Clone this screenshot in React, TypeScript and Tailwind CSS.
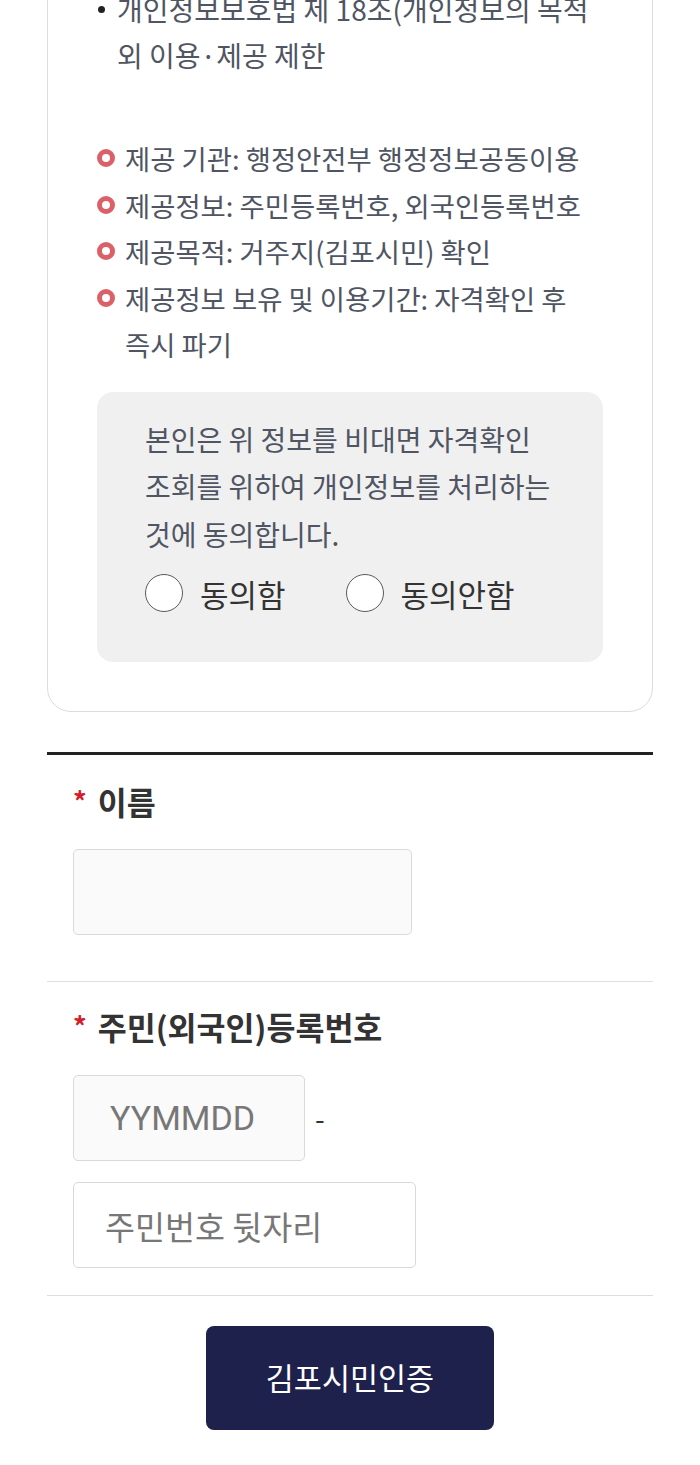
import { ReactNode } from "react"

const font = {
  fontFamily: '"Noto Sans CJK KR", "Noto Sans", sans-serif',
}

const RedBullet = ({ children }: { children: ReactNode }) => (
  <li className="flex items-start">
    <span className="mt-[14px] mr-[10px] h-[18px] w-[18px] shrink-0 rounded-full border-[5px] border-[#da6168] bg-white" />
    <span>{children}</span>
  </li>
)

const Radio = ({ label }: { label: string }) => (
  <label className="flex items-center gap-[17px]">
    <span className="h-[38px] w-[38px] rounded-full border-[1.5px] border-[#5a5a5a] bg-white" />
    <span className="text-[31px] leading-none text-[#333]">{label}</span>
  </label>
)

const FieldLabel = ({ children }: { children: ReactNode }) => (
  <div className="flex items-center pl-[26px] text-[31.5px] font-bold leading-[40px] text-[#333]">
    <span className="mr-[11px] text-[27px] text-[#d21f2d]">*</span>
    <span>{children}</span>
  </div>
)

export default function App() {
  return (
    <div className="min-h-[1465px] bg-white px-[47px]" style={font}>
      <div className="-mt-[60px] rounded-[24px] border border-[#dcdcdc] px-[49px] pt-[45px] pb-[49px]">
        <ul className="text-[28px] leading-[46px] text-[#4f5563]">
          <li className="flex items-start">
            <span className="mt-[20px] mr-[12px] ml-[1px] h-[7px] w-[7px] shrink-0 rounded-full bg-[#222]" />
            <span className="whitespace-nowrap">
              개인정보보호법 제 18조(개인정보의 목적
              <br />외 이용·제공 제한
            </span>
          </li>
        </ul>

        <ul className="mt-[57px] text-[27.4px] leading-[46.5px] text-[#4f5563]">
          <RedBullet>제공 기관: 행정안전부 행정정보공동이용</RedBullet>
          <RedBullet>제공정보: 주민등록번호, 외국인등록번호</RedBullet>
          <RedBullet>제공목적: 거주지(김포시민) 확인</RedBullet>
          <RedBullet>
            제공정보 보유 및 이용기간: 자격확인 후
            <br />
            즉시 파기
          </RedBullet>
        </ul>

        <div className="mt-[24px] rounded-[16px] bg-[#f0f0f0] px-[48px] pt-[24px] pb-[50px]">
          <p className="whitespace-nowrap text-[28px] leading-[47.5px] text-[#4f5563]">
            본인은 위 정보를 비대면 자격확인
            <br />
            조회를 위하여 개인정보를 처리하는
            <br />
            것에 동의합니다.
          </p>
          <div className="mt-[16px] flex items-center gap-[60px]">
            <Radio label="동의함" />
            <Radio label="동의안함" />
          </div>
        </div>
      </div>

      <div className="mt-[40px] border-t-[3px] border-[#222]">
        <div className="pt-[26px] pb-[46px]">
          <FieldLabel>이름</FieldLabel>
          <input
            type="text"
            className="mt-[28px] ml-[26px] block h-[86px] w-[339px] rounded-[5px] border border-[#d9d9d9] bg-[#fafafa] px-[30px] text-[30px] outline-none"
          />
        </div>

        <div className="border-t border-[#dddddd] pt-[24px] pb-[27px]">
          <FieldLabel>주민(외국인)등록번호</FieldLabel>
          <div className="mt-[29px] ml-[26px] flex items-center">
            <input
              type="text"
              placeholder="YYMMDD"
              className="block h-[86px] w-[232px] rounded-[5px] border border-[#d9d9d9] bg-[#fafafa] px-[36px] font-['Roboto','Noto_Sans_CJK_KR',sans-serif] text-[34px] text-[#333] outline-none placeholder:text-[#777]"
            />
            <span className="ml-[10px] text-[28px] text-[#333]">-</span>
          </div>
          <input
            type="password"
            placeholder="주민번호 뒷자리"
            className="mt-[21px] ml-[26px] block h-[86px] w-[343px] rounded-[5px] border border-[#d9d9d9] bg-white px-[31px] text-[32.6px] text-[#333] outline-none placeholder:text-[#777]"
          />
        </div>

        <div className="flex justify-center border-t border-[#dddddd] pt-[30px]">
          <button className="h-[104px] w-[288px] rounded-[8px] bg-[#1e214b] text-[30.5px] text-white">
            김포시민인증
          </button>
        </div>
      </div>
    </div>
  )
}
